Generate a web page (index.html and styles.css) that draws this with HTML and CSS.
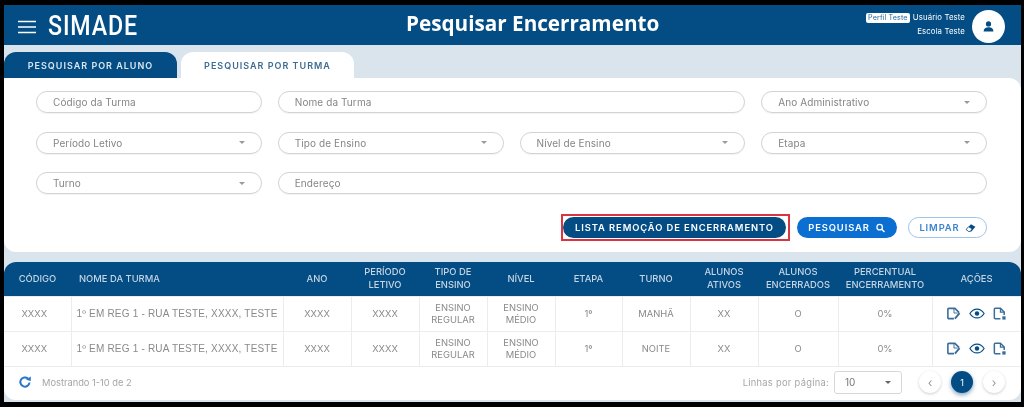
FILE: index.html
```html
<!DOCTYPE html>
<html lang="pt-BR">
<head>
  <meta charset="UTF-8" />
  <meta name="viewport" content="width=device-width, initial-scale=1" />
  <title>Pesquisar Encerramento</title>
  <link rel="stylesheet" href="styles.css">
</head>
<body>

<div class="frame">
  <header class="topbar">
    <div class="brand">
      <svg class="menu-icon" viewBox="0 0 18 14"><path d="M0 1.500h18M0 7h18M0 12.500h18" stroke="#fff" stroke-width="1.600" fill="none"/></svg>
      <span class="logo">SIMADE</span>
    </div>
    <h1>Pesquisar Encerramento</h1>
    <div class="user">
      <div class="user-text">
        <p><span class="perfil">Perfil Teste</span> Usuário Teste</p>
        <p>Escola Teste</p>
      </div>
      <div class="avatar">
        <svg viewBox="0 0 16 16"><circle cx="8" cy="4.800" r="3.200" fill="#034c84"/><path d="M2 14c0-3.600 2.600-5 6-5s6 1.400 6 5z" fill="#034c84"/></svg>
      </div>
    </div>
  </header>

  <div class="tabs">
    <div class="tab active-dark">PESQUISAR POR ALUNO</div>
    <div class="tab">PESQUISAR POR TURMA</div>
  </div>

  <section class="panel">
    <div class="fields">
      <div class="field">Código da Turma</div>
      <div class="field span-2">Nome da Turma</div>
      <div class="field select">Ano Administrativo</div>
      <div class="field select">Período Letivo</div>
      <div class="field select">Tipo de Ensino</div>
      <div class="field select">Nível de Ensino</div>
      <div class="field select">Etapa</div>
      <div class="field select">Turno</div>
      <div class="field span-3">Endereço</div>
    </div>
    <div class="actions">
      <div class="highlight"><button class="btn btn-dark">LISTA REMOÇÃO DE ENCERRAMENTO</button></div>
      <button class="btn btn-blue">PESQUISAR
        <svg viewBox="0 0 12 12"><circle cx="5" cy="5" r="3.300" fill="none" stroke="#fff" stroke-width="1.500"/><path d="M7.500 7.500l3.300 3.300" stroke="#fff" stroke-width="1.700"/></svg>
      </button>
      <button class="btn btn-outline">LIMPAR
        <svg viewBox="0 0 12 10"><path d="M6.500.8l4.800 2.900-4.300 5H4L1 6.800z" fill="#034c84"/><path d="M1.200 6.600l2.700-3 4 2.400-2.300 2.700H3.800z" fill="#fff" stroke="#034c84" stroke-width=".8"/></svg>
      </button>
    </div>
  </section>

  <section class="results">
    <table>
      <colgroup>
        <col class="c-cod"><col class="c-nome"><col class="c-std"><col class="c-std"><col class="c-std"><col class="c-std"><col class="c-etapa"><col class="c-std"><col class="c-std"><col class="c-perc1"><col class="c-perc2"><col>
      </colgroup>
      <thead>
        <tr>
          <th>CÓDIGO</th>
          <th class="left">NOME DA TURMA</th>
          <th>ANO</th>
          <th>PERÍODO<br>LETIVO</th>
          <th>TIPO DE<br>ENSINO</th>
          <th>NÍVEL</th>
          <th>ETAPA</th>
          <th>TURNO</th>
          <th>ALUNOS<br>ATIVOS</th>
          <th>ALUNOS<br>ENCERRADOS</th>
          <th>PERCENTUAL<br>ENCERRAMENTO</th>
          <th>AÇÕES</th>
        </tr>
      </thead>
      <tbody>
        <tr>
          <td class="cod">XXXX</td>
          <td class="nome">1º EM REG 1 - RUA TESTE, XXXX, TESTE</td>
          <td>XXXX</td>
          <td>XXXX</td>
          <td>ENSINO<br>REGULAR</td>
          <td>ENSINO<br>MÉDIO</td>
          <td>1º</td>
          <td>MANHÃ</td>
          <td>XX</td>
          <td>O</td>
          <td>0%</td>
          <td class="acoes">
            <svg viewBox="0 0 16 16"><path d="M8.500 13.500H3a1 1 0 0 1-1-1v-9a1 1 0 0 1 1-1h6.500L14 7" fill="none" stroke="#3a6d99" stroke-width="1.700"/><path d="M14.500 7.500L9.500 13.500" stroke="#3a6d99" stroke-width="2"/><path d="M8.500 3v4.500h4" fill="none" stroke="#3a6d99" stroke-width="1"/></svg>
            <svg class="eye" viewBox="0 0 18 12"><path d="M1 6c2-3.200 4.800-5 8-5s6 1.800 8 5c-2 3.200-4.800 5-8 5S3 9.200 1 6z" fill="none" stroke="#034c84" stroke-width="1.300"/><circle cx="9" cy="6" r="2.500" fill="#034c84"/></svg>
            <svg viewBox="0 0 16 16"><path d="M9 13.500H3.500a1 1 0 0 1-1-1v-9a1 1 0 0 1 1-1H9l4 4v3" fill="none" stroke="#3a6d99" stroke-width="1.600"/><path d="M9 2.500v4h4" fill="none" stroke="#3a6d99" stroke-width="1.300"/><rect x="11" y="11" width="3.500" height="3.500" fill="#3a6d99"/></svg>
          </td>
        </tr>
        <tr>
          <td class="cod">XXXX</td>
          <td class="nome">1º EM REG 1 - RUA TESTE, XXXX, TESTE</td>
          <td>XXXX</td>
          <td>XXXX</td>
          <td>ENSINO<br>REGULAR</td>
          <td>ENSINO<br>MÉDIO</td>
          <td>1º</td>
          <td>NOITE</td>
          <td>XX</td>
          <td>O</td>
          <td>0%</td>
          <td class="acoes">
            <svg viewBox="0 0 16 16"><path d="M8.500 13.500H3a1 1 0 0 1-1-1v-9a1 1 0 0 1 1-1h6.500L14 7" fill="none" stroke="#3a6d99" stroke-width="1.700"/><path d="M14.500 7.500L9.500 13.500" stroke="#3a6d99" stroke-width="2"/><path d="M8.500 3v4.500h4" fill="none" stroke="#3a6d99" stroke-width="1"/></svg>
            <svg class="eye" viewBox="0 0 18 12"><path d="M1 6c2-3.200 4.800-5 8-5s6 1.800 8 5c-2 3.200-4.800 5-8 5S3 9.200 1 6z" fill="none" stroke="#034c84" stroke-width="1.300"/><circle cx="9" cy="6" r="2.500" fill="#034c84"/></svg>
            <svg viewBox="0 0 16 16"><path d="M9 13.500H3.500a1 1 0 0 1-1-1v-9a1 1 0 0 1 1-1H9l4 4v3" fill="none" stroke="#3a6d99" stroke-width="1.600"/><path d="M9 2.500v4h4" fill="none" stroke="#3a6d99" stroke-width="1.300"/><rect x="11" y="11" width="3.500" height="3.500" fill="#3a6d99"/></svg>
          </td>
        </tr>
      </tbody>
    </table>
    <div class="pager">
      <div class="showing">
        <svg viewBox="0 0 14 14"><path d="M11.500 7.500A4.600 4.600 0 1 1 10 3.600" fill="none" stroke="#2a74c9" stroke-width="2"/><path d="M8 4.800L12.800 6V1.500z" fill="#2a74c9"/></svg>
        <span>Mostrando 1-10 de 2</span>
      </div>
      <div class="paging">
        <span class="per-page">Linhas por página:</span>
        <div class="page-size">10</div>
        <div class="page-btn prev">&#8249;</div>
        <div class="page-btn current">1</div>
        <div class="page-btn">&#8250;</div>
      </div>
    </div>
  </section>
</div>

</body>
</html>
```

FILE: styles.css
```css
* { box-sizing: border-box; }
html, body { height: 100%; }
body {
  margin: 0;
  background: #000;
  font-family: 'Inter', 'Liberation Sans', sans-serif;
  overflow: hidden;
}
.frame {
  margin: 5px 3px 5px 4px;
  height: 397px;
  background: #dae4ec;
  display: flex;
  flex-direction: column;
  filter: blur(0.6px);
}
.topbar {
  height: 40px;
  flex: none;
  background: #034c84;
  display: grid;
  grid-template-columns: 388px auto 1fr;
  align-items: center;
  padding: 0 16px 0 14px;
  color: #fff;
}
.brand {
  display: flex;
  align-items: center;
  gap: 12px;
  padding-top: 3px;
}
.menu-icon { width: 18px; height: 14px; }
.logo {
  font-family: 'Roboto', sans-serif;
  font-size: 27px;
  font-weight: 500;
  line-height: 1;
  display: inline-block;
  transform: scaleX(0.86);
  transform-origin: left;
  letter-spacing: 1px;
}
.topbar h1 {
  margin: 0 0 4px;
  font-family: 'Open Sans', sans-serif;
  font-size: 20.700px;
  font-weight: 700;
}
.user {
  display: flex;
  justify-content: flex-end;
  align-items: center;
  gap: 7px;
  padding-top: 3px;
}
.user-text {
  text-align: right;
  font-size: 7.800px;
  line-height: 13.500px;
  margin-top: -4px;
  letter-spacing: 0.1px;
}
.user-text p { margin: 0; }
.perfil {
  display: inline-block;
  background: #fff;
  color: #2c6a9c;
  border-radius: 2px;
  padding: 0 2px;
  font-size: 7.200px;
  line-height: 10px;
  margin-right: 1px;
}
.avatar {
  width: 33px;
  height: 33px;
  border-radius: 50%;
  background: #fff;
  display: flex;
  align-items: center;
  justify-content: center;
}
.avatar svg { width: 13px; height: 13px; }
.tabs {
  display: flex;
  gap: 4px;
  margin-top: 7px;
  height: 26px;
  flex: none;
}
.tab {
  width: 173px;
  background: #fff;
  color: #3d6c92;
  border-radius: 12px 12px 0 0;
  font-size: 9px;
  font-weight: 600;
  letter-spacing: 1px;
  display: flex;
  align-items: center;
  justify-content: center;
}
.tab.active-dark { background: #034c84; color: #dbe6ef; }
.panel {
  background: #fff;
  height: 174px;
  flex: none;
  border-radius: 0 12px 12px 12px;
  padding: 13px 34px 0 32px;
}
.fields {
  display: grid;
  grid-template-columns: repeat(4, 1fr);
  gap: 18.500px 16px;
}
.field {
  height: 22px;
  border: 1px solid #d3d3d3;
  border-radius: 11px;
  font-size: 10px;
  letter-spacing: 0.1px;
  color: #858585;
  padding: 0 16px;
  display: flex;
  align-items: center;
  justify-content: space-between;
  box-shadow: 0 1px 1px rgba(0, 0, 0, 0.05);
}
.field.select::after {
  content: "";
  border: 3px solid transparent;
  border-top: 3px solid #9a9a9a;
  border-bottom: 0;
}
.span-2 { grid-column: span 2; }
.span-3 { grid-column: span 3; }
.actions {
  display: flex;
  justify-content: flex-end;
  align-items: center;
  gap: 11px;
  margin-top: 20px;
}
.highlight {
  border: 2px solid #d9343f;
  padding: 1px 2px 1px 0;
  margin-right: -4px;
  display: flex;
}
.btn {
  height: 21px;
  border-radius: 11px;
  font-family: inherit;
  font-size: 9.400px;
  font-weight: 600;
  letter-spacing: 0.9px;
  display: flex;
  align-items: center;
  justify-content: center;
  gap: 5px;
  padding: 0;
  border: none;
}
.btn svg { width: 11px; height: 10px; }
.btn-dark { width: 223px; background: #034c84; color: #fff; }
.btn-blue { width: 100px; background: #0a6fd0; color: #fff; }
.btn-outline { width: 79px; background: #fff; color: #3a84cf; border: 1px solid #9cc4e8; }
.results {
  margin: 10px 0 2px;
  flex: 1;
  background: #fff;
  border-radius: 12px;
  overflow: hidden;
  display: flex;
  flex-direction: column;
}
table {
  width: 100%;
  table-layout: fixed;
  border-collapse: collapse;
}
.c-cod { width: 67px; }
.c-nome { width: 212px; }
.c-std { width: 68px; }
.c-etapa { width: 67px; }
.c-perc1 { width: 80px; }
.c-perc2 { width: 94px; }
thead tr { height: 34px; background: #034c84; }
th {
  padding: 0;
  color: #c5d5e3;
  font-size: 9.400px;
  font-weight: 500;
  line-height: 12.500px;
  text-align: center;
}
th.left { text-align: left; padding-left: 8px; }
tbody tr { height: 35px; }
td {
  padding: 0;
  border: 1px solid #ececec;
  color: #8a8a8a;
  font-size: 9.400px;
  line-height: 12px;
  text-align: center;
}
td:first-child { border-left: none; }
td:last-child { border-right: none; }
td.cod { padding-right: 6px; }
td.nome { font-family: 'Liberation Sans', sans-serif; font-size: 10px; letter-spacing: 0.2px; white-space: nowrap; }
td.acoes svg { width: 15px; height: 15px; vertical-align: middle; margin: 0 2px; }
td.acoes svg.eye { width: 16px; height: 11px; margin: 0 3px; }
.pager {
  flex: 1;
  display: flex;
  align-items: center;
  justify-content: space-between;
  padding: 0 16px 2px 14px;
}
.showing, .paging { display: flex; align-items: center; }
.showing { gap: 10px; font-size: 9.300px; color: #a5a5a5; }
.showing svg { width: 14px; height: 14px; }
.per-page { font-size: 9.300px; color: #a5a5a5; letter-spacing: 0.3px; margin-right: 5px; }
.page-size {
  width: 68px;
  height: 23px;
  border: 1px solid #d8d8d8;
  border-radius: 3px;
  font-size: 10px;
  color: #777;
  padding: 0 10px;
  display: flex;
  align-items: center;
  justify-content: space-between;
}
.page-size::after {
  content: "";
  border: 3px solid transparent;
  border-top: 3px solid #666;
  border-bottom: 0;
}
.page-btn {
  width: 22px;
  height: 22px;
  border-radius: 50%;
  background: #fff;
  color: #999;
  font-size: 12px;
  display: flex;
  align-items: center;
  justify-content: center;
  box-shadow: 0 1px 3px rgba(0, 0, 0, 0.2);
  margin-left: 10px;
}
.page-btn.prev { margin-left: 17px; }
.page-btn.current {
  background: #034c84;
  color: #fff;
  font-size: 9px;
  box-shadow: 0 2px 4px rgba(3, 76, 132, 0.5);
}
```
